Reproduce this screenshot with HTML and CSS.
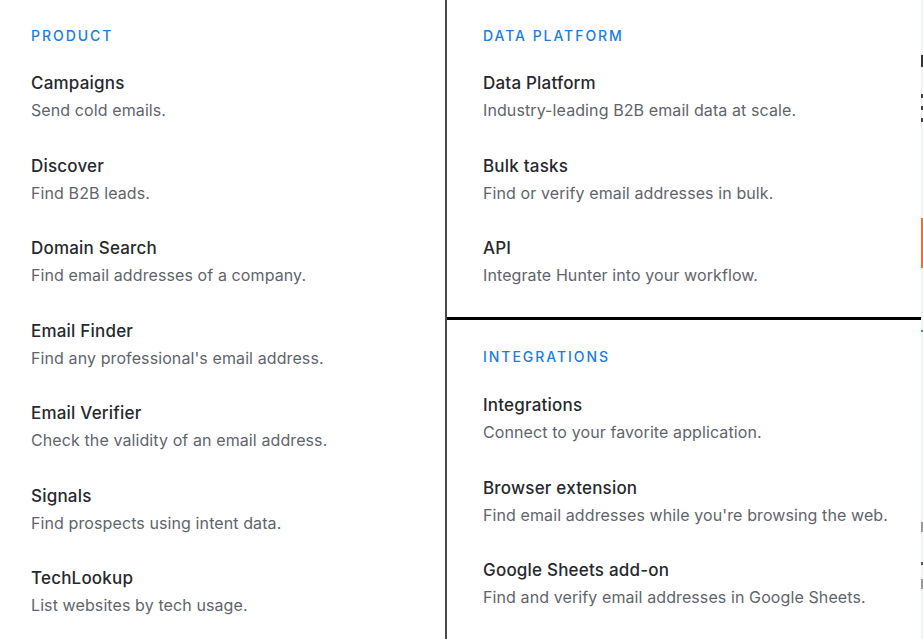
FILE: index.html
```html
<!DOCTYPE html>
<html>
<head>
<meta charset="utf-8">
<link rel="stylesheet" href="styles.css">
</head>
<body>
<div class="menu">
  <section class="col left">
    <h3 class="heading">PRODUCT</h3>
    <ul class="items">
      <li><div class="title">Campaigns</div><div class="desc">Send cold emails.</div></li>
      <li><div class="title">Discover</div><div class="desc">Find B2B leads.</div></li>
      <li><div class="title">Domain Search</div><div class="desc">Find email addresses of a company.</div></li>
      <li><div class="title">Email Finder</div><div class="desc">Find any professional's email address.</div></li>
      <li><div class="title">Email Verifier</div><div class="desc">Check the validity of an email address.</div></li>
      <li><div class="title">Signals</div><div class="desc">Find prospects using intent data.</div></li>
      <li><div class="title">TechLookup</div><div class="desc">List websites by tech usage.</div></li>
    </ul>
  </section>
  <div class="col right">
    <section class="block top">
      <h3 class="heading">DATA PLATFORM</h3>
      <ul class="items">
        <li><div class="title">Data Platform</div><div class="desc">Industry-leading B2B email data at scale.</div></li>
        <li><div class="title">Bulk tasks</div><div class="desc">Find or verify email addresses in bulk.</div></li>
        <li><div class="title">API</div><div class="desc">Integrate Hunter into your workflow.</div></li>
      </ul>
    </section>
    <section class="block bottom">
      <h3 class="heading">INTEGRATIONS</h3>
      <ul class="items">
        <li><div class="title">Integrations</div><div class="desc">Connect to your favorite application.</div></li>
        <li><div class="title">Browser extension</div><div class="desc">Find email addresses while you're browsing the web.</div></li>
        <li><div class="title">Google Sheets add-on</div><div class="desc">Find and verify email addresses in Google Sheets.</div></li>
      </ul>
    </section>
  </div>
  <div class="strip">
    <span class="mark m1"></span>
    <span class="mark m2"></span>
    <span class="mark m3"></span>
    <span class="mark m4"></span>
    <span class="mark orange"></span>
    <span class="mark green"></span>
    <span class="mark m5"></span>
    <span class="mark m6"></span>
    <span class="mark m7"></span>
  </div>
</div>
</body>
</html>
```
FILE: styles.css
```css
* { box-sizing: border-box; }
html, body { margin: 0; padding: 0; background: #fff; }
body {
  font-family: Inter, "Noto Sans", "Liberation Sans", sans-serif;
  width: 923px;
  height: 639px;
  overflow: hidden;
}
.menu {
  display: flex;
  height: 639px;
}
.col.left {
  width: 447px;
  padding: 26px 0 0 31px;
  border-right: 2px solid #4a4a4a;
}
.col.right {
  width: 474px;
  display: flex;
  flex-direction: column;
}
.block { padding-left: 36px; }
.block.top {
  padding-top: 26px;
  padding-bottom: 30px;
  border-bottom: 3px solid #000;
}
.block.bottom { padding-top: 27px; }
.block.bottom .heading { margin-bottom: 27px; }
.heading {
  margin: 0 0 26px 0;
  font-size: 14px;
  line-height: 19px;
  font-weight: 500;
  letter-spacing: 1.95px;
  color: #1a7de0;
}
.items {
  list-style: none;
  margin: 0;
  padding: 0;
  display: flex;
  flex-direction: column;
  gap: 31.5px;
}
.title {
  font-size: 17px;
  line-height: 24px;
  font-weight: 500;
  letter-spacing: 0.2px;
  color: #26292e;
  margin-bottom: 3px;
}
.desc {
  font-size: 16px;
  line-height: 24px;
  color: #60656c;
  letter-spacing: 0.1px;
}
.strip {
  width: 2px;
  background: #f1f2f4;
  display: flex;
  flex-direction: column;
}
.mark { display: block; width: 2px; }
.m1 { margin-top: 55px; height: 12px; background: #333; }
.m2 { margin-top: 27px; height: 4px; background: #444; }
.m3 { margin-top: 8px; height: 4px; background: #444; }
.m4 { margin-top: 8px; height: 4px; background: #444; }
.orange { margin-top: 96px; height: 50px; background: #f06a3a; }
.green { margin-top: 62px; height: 2px; background: #3aa35a; }
.m5 { margin-top: 190px; height: 10px; background: #999; }
.m6 { margin-top: 30px; height: 3px; background: #555; }
.m7 { margin-top: 14px; height: 10px; background: #999; }
```
